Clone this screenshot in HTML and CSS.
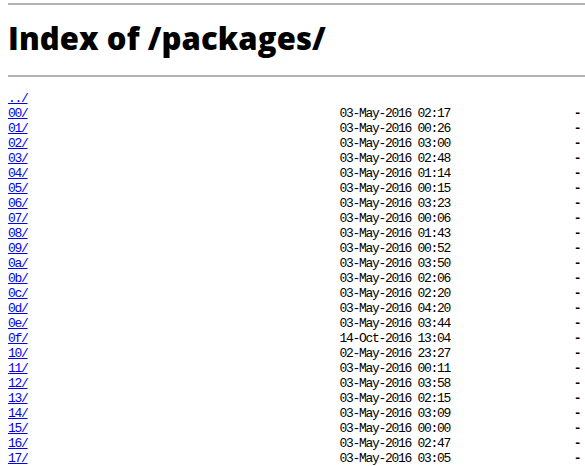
FILE: index.html
```html
<!DOCTYPE html>
<html>
<head>
<meta charset="utf-8">
<title>Index of /packages/</title>
<link rel="stylesheet" href="styles.css">
</head>
<body>
<div class="topline"></div>
<h1 class="title">Index of /packages/</h1>
<hr class="rule">
<pre class="listing"><a href="../">../</a>
<a href="00/">00/</a>                                                03-May-2016 02:17                   <span class="size">-</span>
<a href="01/">01/</a>                                                03-May-2016 00:26                   <span class="size">-</span>
<a href="02/">02/</a>                                                03-May-2016 03:00                   <span class="size">-</span>
<a href="03/">03/</a>                                                03-May-2016 02:48                   <span class="size">-</span>
<a href="04/">04/</a>                                                03-May-2016 01:14                   <span class="size">-</span>
<a href="05/">05/</a>                                                03-May-2016 00:15                   <span class="size">-</span>
<a href="06/">06/</a>                                                03-May-2016 03:23                   <span class="size">-</span>
<a href="07/">07/</a>                                                03-May-2016 00:06                   <span class="size">-</span>
<a href="08/">08/</a>                                                03-May-2016 01:43                   <span class="size">-</span>
<a href="09/">09/</a>                                                03-May-2016 00:52                   <span class="size">-</span>
<a href="0a/">0a/</a>                                                03-May-2016 03:50                   <span class="size">-</span>
<a href="0b/">0b/</a>                                                03-May-2016 02:06                   <span class="size">-</span>
<a href="0c/">0c/</a>                                                03-May-2016 02:20                   <span class="size">-</span>
<a href="0d/">0d/</a>                                                03-May-2016 04:20                   <span class="size">-</span>
<a href="0e/">0e/</a>                                                03-May-2016 03:44                   <span class="size">-</span>
<a href="0f/">0f/</a>                                                14-Oct-2016 13:04                   <span class="size">-</span>
<a href="10/">10/</a>                                                02-May-2016 23:27                   <span class="size">-</span>
<a href="11/">11/</a>                                                03-May-2016 00:11                   <span class="size">-</span>
<a href="12/">12/</a>                                                03-May-2016 03:58                   <span class="size">-</span>
<a href="13/">13/</a>                                                03-May-2016 02:15                   <span class="size">-</span>
<a href="14/">14/</a>                                                03-May-2016 03:09                   <span class="size">-</span>
<a href="15/">15/</a>                                                03-May-2016 00:00                   <span class="size">-</span>
<a href="16/">16/</a>                                                03-May-2016 02:47                   <span class="size">-</span>
<a href="17/">17/</a>                                                03-May-2016 03:05                   <span class="size">-</span>
</pre>
</body>
</html>
```
FILE: styles.css
```css
html {
  overflow: hidden;
}
body {
  margin: 0 0 0 8px;
  background: #fff;
  color: #000;
}
.topline {
  margin: 0 0 0 -8px;
  height: 3px;
  border-bottom: 2px solid #b4b4b4;
}
.title {
  font-family: "Open Sans", sans-serif;
  font-weight: 800;
  font-size: 31px;
  line-height: 40px;
  letter-spacing: 0.1px;
  margin: 13px 0 17px 0;
}
.rule {
  margin: 0;
  border: 0;
  border-top: 2px solid #b4b4b4;
}
.listing {
  font-family: "Liberation Mono", monospace;
  font-size: 13px;
  line-height: 15px;
  letter-spacing: -1.3px;
  margin: 14px 0 0 0;
  white-space: pre;
}
.listing a {
  color: #0000ee;
}
.size {
  font-weight: 700;
  letter-spacing: 0;
}
```
